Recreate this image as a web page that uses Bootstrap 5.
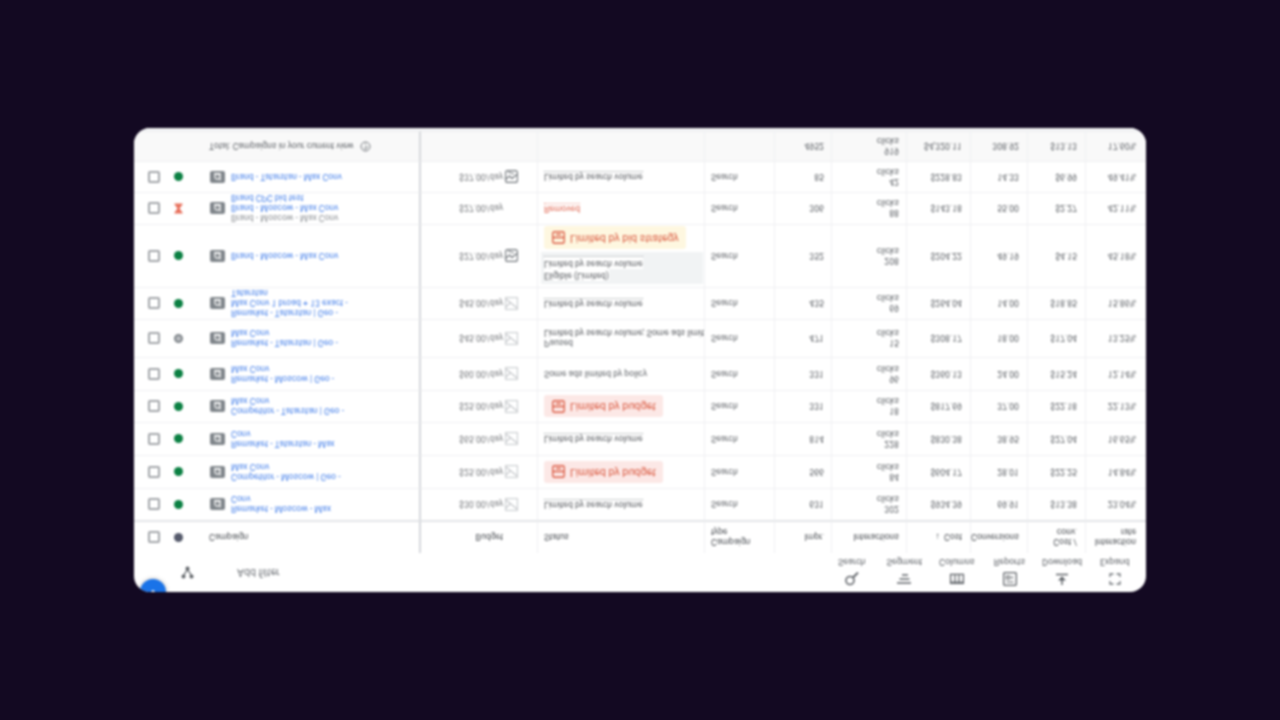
<!DOCTYPE html>
<html lang="en">
<head>
<meta charset="utf-8">
<title>Campaigns</title>
<link href="https://cdn.jsdelivr.net/npm/bootstrap@5.3.0/dist/css/bootstrap.min.css" rel="stylesheet">
<style>
html,body{height:100%;}
body{background:#130922;font-family:Roboto,"Liberation Sans",sans-serif;font-size:8.7px;color:#5f6368;}
.stage{height:720px;}
.panel{width:1012px;height:464px;background:#fff;border-radius:16px;overflow:hidden;transform:scaleY(-1);filter:blur(.9px);position:relative;}
.fab{position:absolute;left:6px;top:-13px;width:26px;height:26px;border-radius:50%;background:#1a73e8;box-shadow:0 0 4px rgba(0,0,0,.3);}
.fab svg{position:absolute;left:6px;top:10px;}
.topbar{height:39px;padding-left:47px;}
.addf{margin-left:43px;font-size:10.6px;color:#6f7378;padding-top:1px;}
.tools{margin-right:5px;}
.tool{width:52.6px;padding-top:1px;color:#5f6368;font-size:9px;line-height:10px;}
.tool svg{display:block;margin-bottom:5px;}
.gridtbl{table-layout:fixed;width:1012px;border-collapse:separate;border-spacing:0;margin:0;font-size:8.7px;line-height:10px;}
.gridtbl tr td{padding:0;border-bottom:1px solid #eff0f2;border-right:1px solid #eff0f2;vertical-align:middle;color:#5f6368;background:transparent;box-shadow:none;}
.gridtbl tr td:last-child{border-right:0;}
.gridtbl tr td.c0{border-right:2px solid #d6d8dc;}
.gridtbl tr.headrow td{border-bottom:2px solid #e3e5e8;color:#4a4e53;}
.gridtbl tr.totrow td{background:#f9f9f9;border-bottom:1px solid #eff0f2;}
.w0{width:287px}.w1{width:117px}.w2{width:167px}.w3{width:70px}.w4{width:57px}.w5{width:75px}.w6{width:64px}.w7{width:57px}.w8{width:58px}.w9{width:60px}
.h30{height:30px}.h31{height:31px}.h32{height:32px}.h33{height:33px}.h38{height:38px}.h63{height:63px}
.lead0{padding-left:14px;}
.tick{width:12px;height:12px;border:2px solid #a3a6aa;border-radius:2px;flex:none;}
.stat{width:9px;height:9px;margin-left:14px;border-radius:50%;flex:none;background:#0b8043;}
.stat-head{background:#555a6b;}
.stat-grey{background:#80868b;border:2.5px solid #80868b;position:relative;}
.stat-grey::after{content:"";position:absolute;inset:0;background:#b9bcc0;border-radius:50%;}
.hour{margin-left:14px;flex:none;}
.camp{margin-left:27px;flex:none;}
.cname{margin-left:6px;color:#4680ea;font-size:8.7px;line-height:10px;}
.cname span{display:block;}
.cname .rem{color:#8b8f94;}
.cname-head{margin-left:26px;color:#4a4e53;}
.total-txt{margin-left:75px;color:#5f6368;}
.qmark{margin-left:6px;}
.gridtbl tr td.bud{padding-right:19px;}
.gridtbl tr td.budh{padding-right:34px;text-align:right;}
.bud-inner{justify-content:flex-end;}
.bud-inner svg{margin-left:2px;}
.bud-none{margin-right:15px;}
.gridtbl tr td.bud .bud-txt{color:#77797d;}
.gridtbl tr td.stxt{padding-left:6px;}
.dotted{border-bottom:1px dotted #999da2;display:inline-block;line-height:9px;color:#55585d;}
.clipline{display:block;white-space:nowrap;overflow:hidden;}
.clipline .dotted{display:inline;}
.redtxt{color:#e0654f;border-bottom:1px dotted #ee9a8b;display:inline-block;line-height:9px;}
.chip{height:22px;margin-left:6px;padding:0 7px 0 8px;border-radius:3px;font-size:10.8px;display:inline-flex;align-items:center;gap:5px;color:#d9583f;}
.chip-red{background:#fce8e6;}
.chip-yellow{background:#fef7e0;height:23px;}
.greybox{margin:1px 1px 3px 3px;height:32px;background:#f1f3f4;padding:3px 3px;}
.greybox span{background:#fff;display:table;line-height:10px;padding:0 0 2px 0;color:#55585d;}
.greybox .dotted{border-bottom:1px dotted #999da2;}
.gridtbl tr td.typ{padding-left:6px;}
.gridtbl tr td.num7{padding-right:8px;text-align:right;}
.gridtbl tr td.num{padding-right:7px;text-align:right;}
.gridtbl tr td.num10{padding-right:10px;text-align:right;}
.footstrip{height:3px;background:#f3f4f5;}
</style>
</head>
<body>
<svg width="0" height="0" class="d-block position-absolute">
<defs>
<symbol id="i-camp" viewBox="0 0 15 12"><rect width="15" height="12" rx="2" fill="#80868b"/><path d="M10 2.5v6.5M10 6.3a2.6 2.6 0 1 0 0 .4M4 9.3h6.6" fill="none" stroke="#fff" stroke-width="1.2"/></symbol>
<symbol id="i-spark" viewBox="0 0 13 13"><rect x=".6" y=".6" width="11.8" height="11.8" rx="2" fill="none" stroke="#70757a" stroke-width="1.1"/><path d="M1 4l3.5 3L7 4.5l5 4" fill="none" stroke="#70757a" stroke-width="1.2"/><path d="M3 11l6-2" stroke="#70757a" stroke-width="1"/></symbol>
<symbol id="i-spark2" viewBox="0 0 13 13"><rect x=".6" y=".6" width="11.8" height="11.8" fill="none" stroke="#c4c7ca" stroke-width="1"/><path d="M1 11L12 2M1 3l4.5 4.5" fill="none" stroke="#c4c7ca" stroke-width="1.1"/></symbol>
<symbol id="i-chip" viewBox="0 0 13 13"><rect x=".8" y=".8" width="11.4" height="11.4" rx="1.5" fill="none" stroke="#dc5f48" stroke-width="1.4"/><path d="M1 6.5h11M4 9.5h5" fill="none" stroke="#dc5f48" stroke-width="1.4"/></symbol>
</defs>
</svg>
<div class="stage d-flex align-items-center justify-content-center">
<div class="panel">
  <div class="fab"><svg width="14" height="6" viewBox="0 0 14 6"><path d="M4 1l3 3 3-3" fill="none" stroke="#fff" stroke-width="1.6"/></svg></div>
  <div class="topbar d-flex align-items-center justify-content-between">
    <div class="d-flex align-items-center">
      <svg width="13" height="13" viewBox="0 0 13 13"><path d="M2.5 3.5L6.5 9.5L10.5 3.5" fill="none" stroke="#5f6368" stroke-width="1.3"/><circle cx="2.5" cy="2.5" r="2" fill="#5f6368"/><circle cx="10.5" cy="2.5" r="2" fill="#5f6368"/><circle cx="6.5" cy="10.5" r="2" fill="#5f6368"/></svg>
      <span class="addf">Add filter</span>
    </div>
    <div class="tools d-flex">
      <div class="tool d-flex flex-column align-items-center"><svg width="16" height="14" viewBox="0 0 16 14"><circle cx="6" cy="5.5" r="4" fill="none" stroke="#5f6368" stroke-width="1.6"/><path d="M9 8.5l5 5" stroke="#5f6368" stroke-width="1.8"/></svg>Search</div>
      <div class="tool d-flex flex-column align-items-center"><svg width="16" height="14" viewBox="0 0 16 14"><path d="M1 3h14M3.5 7h10M6 11h6" stroke="#5f6368" stroke-width="1.3"/></svg>Segment</div>
      <div class="tool d-flex flex-column align-items-center"><svg width="16" height="14" viewBox="0 0 16 14"><rect x="1.6" y="2.6" width="12.8" height="9" fill="none" stroke="#5f6368" stroke-width="1.3"/><path d="M1.6 4h12.8M6 3v8M10 3v8" stroke="#5f6368" stroke-width="1.2"/></svg>Columns</div>
      <div class="tool d-flex flex-column align-items-center"><svg width="16" height="14" viewBox="0 0 16 14"><rect x="1.7" y=".7" width="12.6" height="12.6" rx="1" fill="none" stroke="#5f6368" stroke-width="1.3"/><path d="M4.5 4h7M4.5 7h3v3h-3zM10 7v3" fill="none" stroke="#5f6368" stroke-width="1.1"/></svg>Reports</div>
      <div class="tool d-flex flex-column align-items-center"><svg width="16" height="14" viewBox="0 0 16 14"><path d="M8 1v7" stroke="#5f6368" stroke-width="1.5"/><path d="M4 5.5h8L8 9.8z" fill="#5f6368"/><path d="M2 11.5h12" stroke="#5f6368" stroke-width="1.4"/></svg>Download</div>
      <div class="tool d-flex flex-column align-items-center"><svg width="16" height="14" viewBox="0 0 16 14"><path d="M3 5V2h3.5M9.5 2H13v3M13 9v3H9.5M6.5 12H3V9" fill="none" stroke="#70757a" stroke-width="1.3"/></svg>Expand</div>
    </div>
  </div>
  <table class="table gridtbl">
    <colgroup><col class="w0"><col class="w1"><col class="w2"><col class="w3"><col class="w4"><col class="w5"><col class="w6"><col class="w7"><col class="w8"><col class="w9"></colgroup>
    <tbody>
      <tr class="headrow h33">
        <td class="c0"><div class="d-flex align-items-center lead0"><span class="tick"></span><span class="stat stat-head"></span><span class="cname-head">Campaign</span></div></td>
        <td class="budh">Budget</td>
        <td class="stxt">Status</td>
        <td class="typ">Campaign<br>type</td>
        <td class="num">Impr.</td>
        <td class="num">Interactions</td>
        <td class="num7">&#8595;&nbsp; Cost</td>
        <td class="num7">Conversions</td>
        <td class="num7">Cost /<br>conv.</td>
        <td class="num10">Interaction<br>rate</td>
      </tr>
      <tr class="h32">
        <td class="c0"><div class="d-flex align-items-center lead0"><span class="tick"></span><span class="stat"></span><svg class="camp" width="15" height="12"><use href="#i-camp"/></svg><div class="cname"><span>Remarket - Moscow - Max</span><span>Conv</span></div></div></td>
        <td class="bud"><div class="d-flex align-items-center bud-inner"><span class="bud-txt">$30.00/day</span><svg width="13" height="13"><use href="#i-spark2"/></svg></div></td>
        <td class="stxt"><span class="dotted">Limited by search volume</span></td>
        <td class="typ">Search</td>
        <td class="num">631</td>
        <td class="num">302<br>clicks</td>
        <td class="num7">$934.39</td>
        <td class="num7">69.91</td>
        <td class="num7">$13.38</td>
        <td class="num10">23.04%</td>
      </tr>
      <tr class="h33">
        <td class="c0"><div class="d-flex align-items-center lead0"><span class="tick"></span><span class="stat"></span><svg class="camp" width="15" height="12"><use href="#i-camp"/></svg><div class="cname"><span>Competitor - Moscow | Geo -</span><span>Max Conv</span></div></div></td>
        <td class="bud"><div class="d-flex align-items-center bud-inner"><span class="bud-txt">$25.00/day</span><svg width="13" height="13"><use href="#i-spark2"/></svg></div></td>
        <td><span class="chip chip-red"><svg width="13" height="13"><use href="#i-chip"/></svg>Limited by budget</span></td>
        <td class="typ">Search</td>
        <td class="num">566</td>
        <td class="num">84<br>clicks</td>
        <td class="num7">$604.17</td>
        <td class="num7">28.01</td>
        <td class="num7">$22.25</td>
        <td class="num10">14.84%</td>
      </tr>
      <tr class="h33">
        <td class="c0"><div class="d-flex align-items-center lead0"><span class="tick"></span><span class="stat"></span><svg class="camp" width="15" height="12"><use href="#i-camp"/></svg><div class="cname"><span>Remarket - Tatarstan - Max</span><span>Conv</span></div></div></td>
        <td class="bud"><div class="d-flex align-items-center bud-inner"><span class="bud-txt">$65.00/day</span><svg width="13" height="13"><use href="#i-spark2"/></svg></div></td>
        <td class="stxt"><span class="dotted">Limited by search volume</span></td>
        <td class="typ">Search</td>
        <td class="num">814</td>
        <td class="num">228<br>clicks</td>
        <td class="num7">$830.38</td>
        <td class="num7">38.95</td>
        <td class="num7">$27.04</td>
        <td class="num10">16.65%</td>
      </tr>
      <tr class="h32">
        <td class="c0"><div class="d-flex align-items-center lead0"><span class="tick"></span><span class="stat"></span><svg class="camp" width="15" height="12"><use href="#i-camp"/></svg><div class="cname"><span>Competitor - Tatarstan | Geo -</span><span>Max Conv</span></div></div></td>
        <td class="bud"><div class="d-flex align-items-center bud-inner"><span class="bud-txt">$25.00/day</span><svg width="13" height="13"><use href="#i-spark2"/></svg></div></td>
        <td><span class="chip chip-red"><svg width="13" height="13"><use href="#i-chip"/></svg>Limited by budget</span></td>
        <td class="typ">Search</td>
        <td class="num">331</td>
        <td class="num">18<br>clicks</td>
        <td class="num7">$817.69</td>
        <td class="num7">37.00</td>
        <td class="num7">$22.18</td>
        <td class="num10">22.13%</td>
      </tr>
      <tr class="h33">
        <td class="c0"><div class="d-flex align-items-center lead0"><span class="tick"></span><span class="stat"></span><svg class="camp" width="15" height="12"><use href="#i-camp"/></svg><div class="cname"><span>Remarket - Moscow | Geo -</span><span>Max Conv</span></div></div></td>
        <td class="bud"><div class="d-flex align-items-center bud-inner"><span class="bud-txt">$60.00/day</span><svg width="13" height="13"><use href="#i-spark2"/></svg></div></td>
        <td class="stxt"><span>Some ads limited by policy</span></td>
        <td class="typ">Search</td>
        <td class="num">331</td>
        <td class="num">96<br>clicks</td>
        <td class="num7">$360.13</td>
        <td class="num7">24.00</td>
        <td class="num7">$15.24</td>
        <td class="num10">12.14%</td>
      </tr>
      <tr class="h38">
        <td class="c0"><div class="d-flex align-items-center lead0"><span class="tick"></span><span class="stat stat-grey"></span><svg class="camp" width="15" height="12"><use href="#i-camp"/></svg><div class="cname"><span>Remarket - Tatarstan | Geo -</span><span>Max Conv</span></div></div></td>
        <td class="bud"><div class="d-flex align-items-center bud-inner"><span class="bud-txt">$45.00/day</span><svg width="13" height="13"><use href="#i-spark2"/></svg></div></td>
        <td class="stxt">Paused<div class="clipline"><span class="dotted">Limited by search volume; Some ads limit</span></div></td>
        <td class="typ">Search</td>
        <td class="num">471</td>
        <td class="num">15<br>clicks</td>
        <td class="num7">$308.17</td>
        <td class="num7">18.00</td>
        <td class="num7">$17.04</td>
        <td class="num10">13.25%</td>
      </tr>
      <tr class="h32">
        <td class="c0"><div class="d-flex align-items-center lead0"><span class="tick"></span><span class="stat"></span><svg class="camp" width="15" height="12"><use href="#i-camp"/></svg><div class="cname"><span>Remarket - Tatarstan | Geo -</span><span>Max Conv 1 broad + 13 exact -</span><span>Tatarstan</span></div></div></td>
        <td class="bud"><div class="d-flex align-items-center bud-inner"><span class="bud-txt">$45.00/day</span><svg width="13" height="13"><use href="#i-spark2"/></svg></div></td>
        <td class="stxt"><span class="dotted">Limited by search volume</span></td>
        <td class="typ">Search</td>
        <td class="num">435</td>
        <td class="num">69<br>clicks</td>
        <td class="num7">$264.04</td>
        <td class="num7">14.00</td>
        <td class="num7">$18.85</td>
        <td class="num10">15.86%</td>
      </tr>
      <tr class="h63">
        <td class="c0"><div class="d-flex align-items-center lead0"><span class="tick"></span><span class="stat"></span><svg class="camp" width="15" height="12"><use href="#i-camp"/></svg><div class="cname"><span>Brand - Moscow - Max Conv</span></div></div></td>
        <td class="bud"><div class="d-flex align-items-center bud-inner"><span class="bud-txt">$27.00/day</span><svg width="13" height="13"><use href="#i-spark"/></svg></div></td>
        <td><div class="greybox"><span>Eligible (Limited)</span><span class="dotted">Limited by search volume</span></div><span class="chip chip-yellow"><svg width="13" height="13"><use href="#i-chip"/></svg>Limited by bid strategy</span></td>
        <td class="typ">Search</td>
        <td class="num">352</td>
        <td class="num">208<br>clicks</td>
        <td class="num7">$204.22</td>
        <td class="num7">49.19</td>
        <td class="num7">$4.15</td>
        <td class="num10">45.18%</td>
      </tr>
      <tr class="h32">
        <td class="c0"><div class="d-flex align-items-center lead0"><span class="tick"></span><svg class="hour" width="9" height="11" viewBox="0 0 9 11"><path d="M.5.5h8v1L5.5 5.5l3 4v1h-8v-1l3-4-3-4z" fill="#e8705c"/></svg><svg class="camp" width="15" height="12"><use href="#i-camp"/></svg><div class="cname"><span class="rem">Brand - Moscow - Max Conv</span><span>Brand - Moscow - Max Conv</span><span>Brand CPC bid test</span></div></div></td>
        <td class="bud"><div class="d-flex align-items-center bud-inner"><span class="bud-txt bud-none">$27.00/day</span></div></td>
        <td class="stxt"><span class="redtxt">Removed</span></td>
        <td class="typ">Search</td>
        <td class="num">306</td>
        <td class="num">88<br>clicks</td>
        <td class="num7">$143.18</td>
        <td class="num7">55.00</td>
        <td class="num7">$2.27</td>
        <td class="num10">42.11%</td>
      </tr>
      <tr class="h31">
        <td class="c0"><div class="d-flex align-items-center lead0"><span class="tick"></span><span class="stat"></span><svg class="camp" width="15" height="12"><use href="#i-camp"/></svg><div class="cname"><span>Brand - Tatarstan - Max Conv</span></div></div></td>
        <td class="bud"><div class="d-flex align-items-center bud-inner"><span class="bud-txt">$37.00/day</span><svg width="13" height="13"><use href="#i-spark"/></svg></div></td>
        <td class="stxt"><span class="dotted">Limited by search volume</span></td>
        <td class="typ">Search</td>
        <td class="num">85</td>
        <td class="num">42<br>clicks</td>
        <td class="num7">$228.83</td>
        <td class="num7">14.33</td>
        <td class="num7">$6.99</td>
        <td class="num10">49.41%</td>
      </tr>
      <tr class="totrow h30">
        <td class="c0"><div class="d-flex align-items-center"><span class="total-txt">Total: Campaigns in your current view</span><svg class="qmark" width="11" height="11" viewBox="0 0 11 11"><circle cx="5.5" cy="5.5" r="4.5" fill="none" stroke="#70757a"/><path d="M4 4.5a1.5 1.5 0 1 1 2 1.4c-.4.2-.5.4-.5.9M5.5 8v.8" fill="none" stroke="#70757a"/></svg></div></td>
        <td></td>
        <td></td>
        <td></td>
        <td class="num">4952</td>
        <td class="num">919<br>clicks</td>
        <td class="num7">$4,320.11</td>
        <td class="num7">308.92</td>
        <td class="num7">$13.13</td>
        <td class="num10">17.60%</td>
      </tr>
    </tbody>
  </table>
  <div class="footstrip"></div>
</div>
</div>
<script src="https://cdn.jsdelivr.net/npm/bootstrap@5.3.0/dist/js/bootstrap.bundle.min.js"></script>
</body>
</html>
